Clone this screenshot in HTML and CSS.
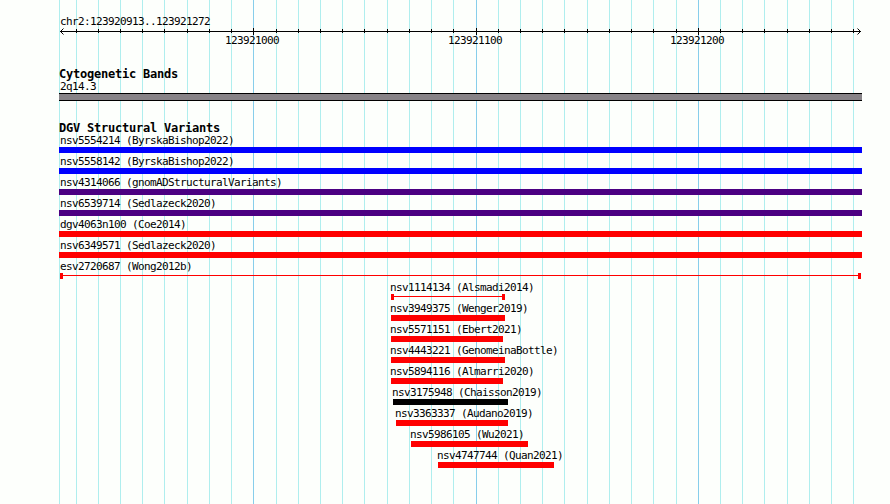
FILE: index.html
```html
<!DOCTYPE html>
<html lang="en">
<head>
<meta charset="utf-8">
<title>chr2:123920913..123921272</title>
<link rel="stylesheet" href="styles.css">
</head>
<body>
<svg class="grid" id="grid" width="890" height="504" shape-rendering="crispEdges" aria-hidden="true"></svg>
<main class="browser">
  <header class="region">
    <div class="label">chr2:123920913..123921272</div>
    <svg class="ruler" id="ruler" width="890" height="21"></svg>
  </header>
  <section class="track bands">
    <h2>Cytogenetic Bands</h2>
    <div class="label">2q14.3</div>
    <div class="band"></div>
  </section>
  <section class="track variants">
    <h2>DGV Structural Variants</h2>
    <div id="rows"></div>
  </section>
</main>
<script src="script.js"></script>
</body>
</html>
```
FILE: styles.css
```css
body {
  margin: 0;
  width: 890px;
  height: 504px;
  overflow: hidden;
  position: relative;
  background: #fdfffc;
  color: #000;
  font-family: "DejaVu Sans Mono", "Liberation Mono", monospace;
}
.grid {
  position: absolute;
  left: 0;
  top: 0;
}
.minor { fill: #afeeee; }
.major { fill: #87ceeb; }
.browser {
  position: relative;
  padding-top: 15px;
}
.label {
  height: 13px;
  padding-left: 60px;
  font-size: 11px;
  line-height: 13px;
  letter-spacing: -0.622px;
  white-space: pre;
}
.ruler {
  display: block;
}
.ruler text {
  font-size: 11px;
  letter-spacing: -0.622px;
}
.arrow {
  fill: none;
  stroke: #000;
  stroke-width: 1;
}
.bands { margin-top: 18px; }
h2 {
  margin: 0;
  height: 13px;
  padding-left: 59px;
  font-size: 12px;
  font-weight: bold;
  line-height: 14px;
  letter-spacing: -0.224px;
  white-space: pre;
}
.band {
  box-sizing: border-box;
  width: 803px;
  height: 8px;
  margin-left: 59px;
  background: #878387;
  border: solid #000;
  border-width: 1px 0;
}
.variants { margin-top: 20px; }
.row {
  height: 21px;
}
.row .label {
  padding-left: 0;
}
.bar {
  height: 6px;
  background: currentColor;
}
.row .label { color: #000; }
.blue { color: #0000ff; }
.purple { color: #4b0082; }
.red { color: #ff0000; }
.black { color: #000; }
.span {
  box-sizing: border-box;
  border: solid currentColor;
  border-width: 0 3px;
  background: linear-gradient(currentColor, currentColor) 0 2px / 100% 1px no-repeat;
}
```
FILE: script.js
```js
const ns = 'http://www.w3.org/2000/svg';
const start = 123920913;
const xOf = pos => Math.round(60 + (pos - start) * 20 / 9);

function add(parent, tag, attrs, text) {
  const el = document.createElementNS(ns, tag);
  for (const k in attrs) el.setAttribute(k, attrs[k]);
  if (text) el.textContent = text;
  parent.appendChild(el);
}

const grid = document.getElementById('grid');
const ruler = document.getElementById('ruler');
add(grid, 'rect', { x: 59, y: 0, width: 1, height: 504, class: 'minor' });
add(ruler, 'rect', { x: 60, y: 3, width: 801, height: 1 });
add(ruler, 'path', { d: 'M63.5 0.5L60.5 3.5L63.5 6.5', class: 'arrow' });
add(ruler, 'path', { d: 'M857.5 0.5L860.5 3.5L857.5 6.5', class: 'arrow' });
for (let pos = 123920920; pos <= 123921270; pos += 10) {
  const x = xOf(pos);
  const major = pos % 100 === 0;
  add(grid, 'rect', { x, y: 0, width: 1, height: 504, class: major ? 'major' : 'minor' });
  add(ruler, 'rect', { x, y: major ? 0 : 1, width: 1, height: major ? 7 : 4 });
  if (major) add(ruler, 'text', { x: x - 28, y: 16 }, String(pos));
}

// name, left edge, right edge, label offset, colour, drawn as a thin span
const variants = [
  ['nsv5554214 (ByrskaBishop2022)', 59, 862, 60, 'blue'],
  ['nsv5558142 (ByrskaBishop2022)', 59, 862, 60, 'blue'],
  ['nsv4314066 (gnomADStructuralVariants)', 59, 862, 60, 'purple'],
  ['nsv6539714 (Sedlazeck2020)', 59, 862, 60, 'purple'],
  ['dgv4063n100 (Coe2014)', 59, 862, 60, 'red'],
  ['nsv6349571 (Sedlazeck2020)', 59, 862, 60, 'red'],
  ['esv2720687 (Wong2012b)', 60, 861, 60, 'red', true],
  ['nsv1114134 (Alsmadi2014)', 391, 505, 390, 'red', true],
  ['nsv3949375 (Wenger2019)', 391, 505, 390, 'red'],
  ['nsv5571151 (Ebert2021)', 391, 503, 390, 'red'],
  ['nsv4443221 (GenomeinaBottle)', 391, 505, 390, 'red'],
  ['nsv5894116 (Almarri2020)', 391, 503, 390, 'red'],
  ['nsv3175948 (Chaisson2019)', 393, 508, 392, 'black'],
  ['nsv3363337 (Audano2019)', 396, 508, 395, 'red'],
  ['nsv5986105 (Wu2021)', 411, 528, 410, 'red'],
  ['nsv4747744 (Quan2021)', 438, 554, 437, 'red']
];
document.getElementById('rows').innerHTML = variants.map(([name, l, r, t, color, thin]) =>
  `<div class="row ${color}"><div class="label" style="margin-left:${t}px">${name}</div>` +
  `<div class="bar${thin ? ' span' : ''}" style="margin-left:${l}px;width:${r - l}px"></div></div>`).join('');
```
